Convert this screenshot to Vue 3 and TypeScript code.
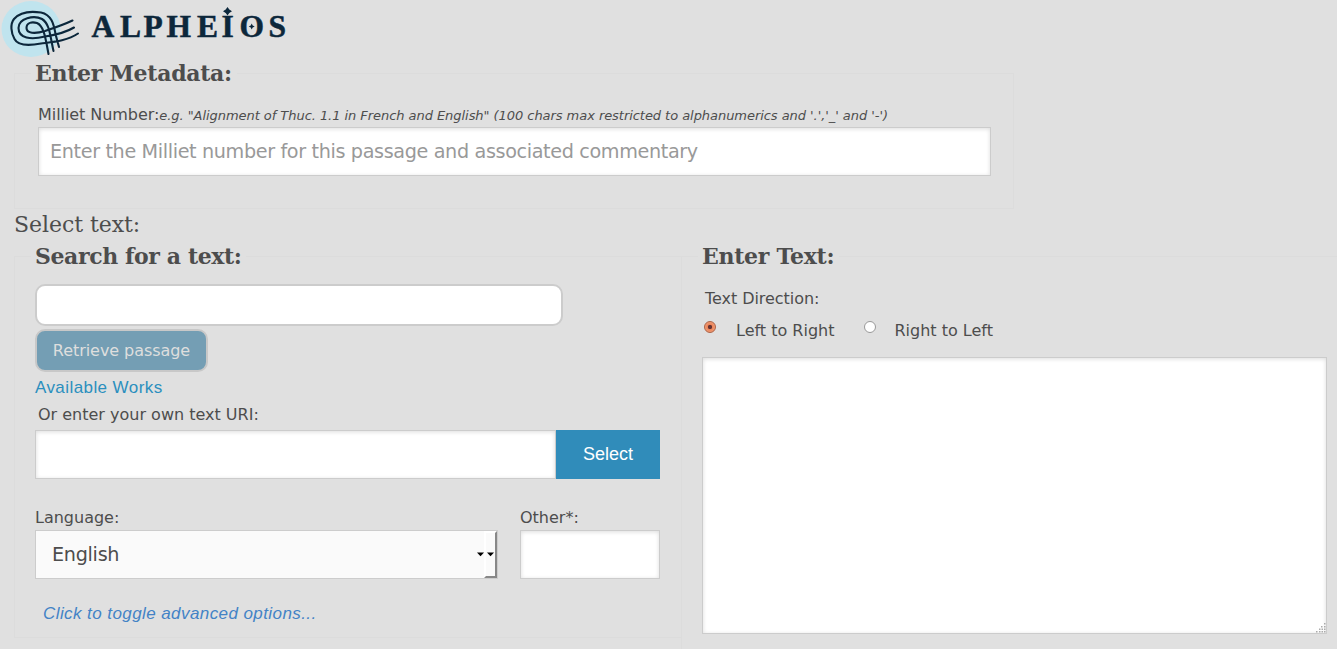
<script setup lang="ts">
import { ref } from 'vue'

const milliet = ref('')
const query = ref('')
const uri = ref('')
const other = ref('')
const passage = ref('')
const direction = ref<'ltr' | 'rtl'>('ltr')

const directions: { value: 'ltr' | 'rtl'; label: string }[] = [
  { value: 'ltr', label: 'Left to Right' },
  { value: 'rtl', label: 'Right to Left' },
]
</script>

<template>
  <main class="page">
    <header class="brand">
      <svg class="logo" width="300" height="60" viewBox="0 0 300 60" role="img" aria-label="Alpheios">
        <ellipse cx="31" cy="29" rx="29.5" ry="28" fill="#c0e4ee" />
        <g class="thread">
          <path d="M72.500 20.500C63 25 54 28 45 31C35 34 26.500 33.500 26.500 28C26.500 22.500 32 21.500 37 23C44 26 45.500 38 48.500 54" />
          <path d="M74 27.500C65 33 55 35 45 36.500C31 40 18.500 38.500 18.500 28C18.500 18 34 15 42 19C50 24 50 36 53.500 51" />
          <path d="M78 33.500C67 41 52 42 41 43.500C28 46 18 46 14.500 39C11 33 10 24 14 19C20 12 31 11 41 12.500C53 15 54 27 56 36L59 47" />
        </g>
        <g class="wordmark">
          <text y="37" x="91.500 120 143.500 166.500 197 221.500 239.500 268.500">ALPHEIOS</text>
          <path d="M227.500 7L229.300 9.500l2.700 1.800-2.700 1.800-1.800 2.500-1.800-2.500-2.700-1.800 2.700-1.800z" />
          <path d="M251.700 23.500l1 2 2 1-2 1-1 2-1-2-2-1 2-1z" />
        </g>
      </svg>
    </header>

    <fieldset class="panel metadata">
      <legend>Enter Metadata:</legend>
      <label class="field-label" for="milliet">Milliet Number:<em>e.g. "Alignment of Thuc. 1.1 in French and English" (100 chars max restricted to alphanumerics and '.','_' and '-')</em></label>
      <input id="milliet" v-model="milliet" class="box" placeholder="Enter the Milliet number for this passage and associated commentary">
    </fieldset>

    <h2>Select text:</h2>

    <div class="columns">
      <fieldset class="panel search">
        <legend class="tight">Search for a text:</legend>
        <input v-model="query" class="query" aria-label="Search">
        <button class="retrieve" type="button">Retrieve passage</button>
        <a class="works">Available Works</a>
        <label class="own" for="uri">Or enter your own text URI:</label>
        <div class="uri-row">
          <input id="uri" v-model="uri" class="box">
          <button type="button">Select</button>
        </div>
        <div class="lang-row">
          <div class="language">
            <span class="lang-label">Language:</span>
            <div class="box select">
              <span>English</span>
              <svg width="7" height="5" viewBox="0 0 7 5"><path d="M0 .500h7L3.500 4.200z" /></svg>
              <i class="drop"><svg width="7" height="5" viewBox="0 0 7 5"><path d="M0 .500h7L3.500 4.200z" /></svg></i>
            </div>
          </div>
          <div class="other">
            <label class="lang-label" for="other">Other*:</label>
            <input id="other" v-model="other" class="box">
          </div>
        </div>
        <a class="advanced">Click to toggle advanced options...</a>
      </fieldset>

      <fieldset class="panel entry">
        <legend>Enter Text:</legend>
        <div class="direction-title">Text Direction:</div>
        <div class="directions">
          <label v-for="d in directions" :key="d.value">
            <input v-model="direction" type="radio" name="direction" :value="d.value">
            <span>{{ d.label }}</span>
          </label>
        </div>
        <div class="area">
          <textarea v-model="passage" class="box" aria-label="Text" />
          <svg class="grip" width="10" height="10" viewBox="0 0 10 10">
            <path d="M8 0h1.500v1.500H8zM5 3h1.500v1.500H5zM8 3h1.500v1.500H8zM3 5.500h1.500V7H3zM5.500 5.500H7V7H5.500zM8 5.500h1.500V7H8zM0 8h1.500v1.500H0zM3 8h1.500v1.500H3zM5.500 8H7v1.500H5.500zM8 8h1.500v1.500H8z" />
          </svg>
        </div>
      </fieldset>
    </div>
  </main>
</template>

<style>
body {
  margin: 0;
  background: #e0e0e0;
}
</style>

<style scoped>
* {
  box-sizing: border-box;
}
.page {
  width: 100%;
  height: 649px;
  overflow: hidden;
  background: #e0e0e0;
  color: #4d4d4d;
  font: 16px/20px "DejaVu Sans", sans-serif;
}
.brand {
  height: 61px;
}
.logo {
  display: block;
}
.thread {
  fill: none;
  stroke: #0c273b;
  stroke-width: 2.1;
  stroke-linecap: round;
}
.wordmark {
  fill: #0c273b;
  font: bold 31.500px "Liberation Serif", serif;
}
.wordmark text {
  stroke: #0c273b;
  stroke-width: 0.5;
}
.panel {
  margin: 0;
  border: 1px solid #dcdcdc;
  padding: 0 20px 0 16px;
  min-width: 0;
}
legend {
  padding: 0 5px 0 4px;
  height: 25px;
  font: bold 22px/24px "DejaVu Serif", serif;
  letter-spacing: -0.28px;
  white-space: nowrap;
}
.tight {
  letter-spacing: -0.4px;
}
.panel > :not(legend) {
  margin-left: 4px;
}
.metadata {
  width: 1000px;
  height: 148px;
  margin-left: 14px;
}
.field-label {
  display: block;
  padding: 19px 0 0 3px;
  height: 41px;
  letter-spacing: -0.06px;
  white-space: nowrap;
}
.field-label em {
  font-size: 13px;
  letter-spacing: -0.05px;
}
.box {
  display: block;
  height: 49px;
  border: 1px solid #ccc;
  border-radius: 0;
  background: #fff;
  box-shadow: inset 0 1px 4px rgba(0, 0, 0, 0.14);
  outline: 0;
  font: 19.200px "DejaVu Sans", sans-serif;
  letter-spacing: -0.36px;
  color: #4d4d4d;
}
.box::placeholder {
  color: #999;
  opacity: 1;
}
.metadata .box {
  width: 953px;
  margin-left: 7px !important;
  padding: 0 11px;
}
h2 {
  margin: 0 0 0 14px;
  height: 35px;
  font: 22px/31px "DejaVu Serif", serif;
  letter-spacing: -0.05px;
}
.columns {
  display: flex;
  width: 1400px;
  padding-left: 14px;
}
.search {
  width: 668px;
  height: 394px;
}
.entry {
  width: 670px;
  height: 450px;
  margin-left: -1px;
}
.query {
  display: block;
  width: 528px;
  height: 42px;
  margin-top: 15px;
  border: 2px solid #ccc;
  border-radius: 10px;
  background: #fff;
  outline: 0;
}
.retrieve {
  display: block;
  width: 173px;
  height: 43px;
  margin-top: 3px;
  padding: 0;
  border: 2px solid #c8c8c8;
  border-radius: 10px;
  background: #749eb4;
  color: #dedede;
  font: 16px "DejaVu Sans", sans-serif;
  letter-spacing: -0.06px;
}
.works,
.advanced {
  display: block;
  color: #2b8fbe;
  font: 17px/20px "Liberation Sans", sans-serif;
  letter-spacing: 0.42px;
}
.works {
  margin-top: 6px;
}
.own {
  display: block;
  height: 26px;
  padding: 7px 0 0 3px;
}
.uri-row {
  display: flex;
  margin-top: 6px;
}
.uri-row .box {
  width: 521px;
}
.uri-row button {
  width: 104px;
  height: 49px;
  padding: 0;
  border: 0;
  background: #308cba;
  color: #fff;
  font: 18px "Liberation Sans", sans-serif;
}
.lang-row {
  display: flex;
  gap: 22px;
  margin-top: 29px;
}
.lang-label {
  display: block;
  height: 22px;
}
.select {
  display: flex;
  align-items: center;
  width: 463px;
  padding-left: 16px;
  background: #fafafa;
  box-shadow: none;
  letter-spacing: -0.3px;
}
.select span {
  flex: 1;
}
.drop {
  display: flex;
  align-items: center;
  justify-content: center;
  width: 13px;
  height: 47px;
  border: 2px solid #fff;
  border-right-color: #888;
  border-bottom-color: #888;
}
.drop svg {
  flex: none;
}
.other .box {
  width: 140px;
}
.advanced {
  margin-top: 25px;
  padding-left: 8px;
  color: #4383c6;
  font-style: italic;
}
.direction-title {
  padding: 20px 0 0 3px;
  height: 52px;
  letter-spacing: -0.05px;
}
.directions {
  display: flex;
  gap: 28px;
}
.directions label {
  display: flex;
}
.directions label + label span {
  margin-left: -2px;
}
.directions input {
  appearance: none;
  width: 12px;
  height: 12px;
  margin: 0 20px 0 2px;
  border: 1px solid #999;
  border-radius: 50%;
  background: #fff;
}
.directions input:checked {
  border-color: #ad6245;
  background: radial-gradient(circle, #633 0 1.800px, #ec8458 2.500px, #f09a74 5px);
}
.area {
  position: relative;
  width: 625px;
  height: 277px;
  margin-top: 16px;
}
.area textarea {
  width: 100%;
  height: 100%;
  resize: none;
}
.grip {
  position: absolute;
  right: 1px;
  bottom: 1px;
  fill: #aaa;
}
</style>
